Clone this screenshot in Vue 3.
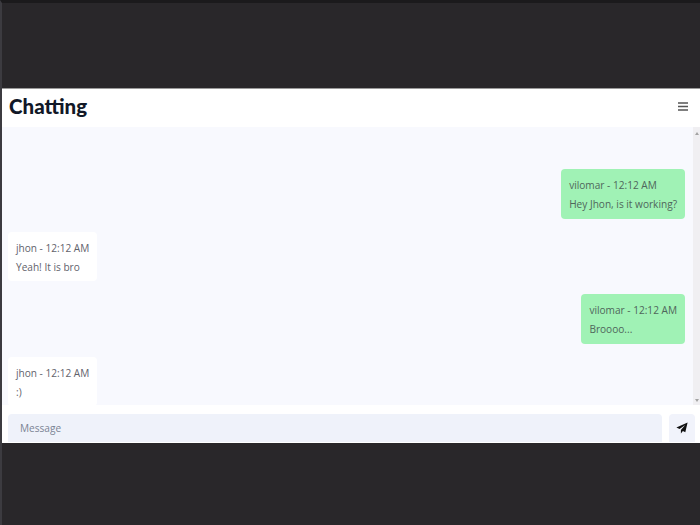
<template>
  <div class="screen">
    <div class="window">
      <header class="header">
        <h1 class="title">Chatting</h1>
        <button class="menu" aria-label="menu">
          <svg width="10" height="9" viewBox="0 0 10 9">
            <path d="M0 1h10M0 4.5h10M0 8h10" stroke="#555" stroke-width="1.4" fill="none" />
          </svg>
        </button>
      </header>
      <div class="chat">
        <div class="messages">
          <div v-for="msg in messages" :key="msg.id" class="bubble" :class="{ mine: msg.mine }">
            <div class="meta">{{ msg.user }} - {{ msg.time }}</div>
            <div class="text">{{ msg.text }}</div>
          </div>
        </div>
        <div class="scrollbar">
          <span class="arrow up"></span>
          <span class="arrow down"></span>
        </div>
      </div>
      <footer class="footer">
        <input class="input" type="text" placeholder="Message" />
        <button class="send" aria-label="send">
          <svg width="12" height="12" viewBox="0 0 12 12">
            <path d="M11.6 0.4 0.4 5.4l3.2 1.7 5.6-4-4.3 4.9v3.4l2-2.4 2.4 1.2z" fill="#111" />
          </svg>
        </button>
      </footer>
    </div>
  </div>
</template>

<script setup>
const messages = [
  { id: 1, user: 'vilomar', time: '12:12 AM', text: 'Hey Jhon, is it working?', mine: true },
  { id: 2, user: 'jhon', time: '12:12 AM', text: 'Yeah! It is bro', mine: false },
  { id: 3, user: 'vilomar', time: '12:12 AM', text: 'Broooo...', mine: true },
  { id: 4, user: 'jhon', time: '12:12 AM', text: ':)', mine: false }
]
</script>

<style>
html,
body {
  margin: 0;
  background: #29272a;
}
</style>

<style scoped>
.screen {
  width: 700px;
  height: 525px;
  box-sizing: border-box;
  padding: 85px 0 82px 0;
  border-top: 3px solid #1b1a1c;
  border-left: 2px solid #3c3b40;
  background: #29272a;
  font-family: "Open Sans", "Noto Sans", sans-serif;
  overflow: hidden;
}

.window {
  height: 355px;
  display: flex;
  flex-direction: column;
  background: #fff;
  border-top: 1px solid #9a9a9a;
  box-sizing: border-box;
}

.header {
  height: 38px;
  flex: none;
  display: flex;
  align-items: center;
  justify-content: space-between;
  padding: 0 12px 5px 7px;
  box-sizing: border-box;
}

.title {
  margin: 0;
  font-family: Lato, "Open Sans", sans-serif;
  font-size: 20.5px;
  font-weight: 900;
  color: #111827;
}

.menu {
  border: 0;
  padding: 1px 0 0;
  background: none;
  display: flex;
}

.chat {
  height: 278px;
  flex: none;
  display: flex;
  background: #f8f9fe;
  overflow: hidden;
}

.messages {
  flex: 1;
  display: flex;
  flex-direction: column;
  align-items: flex-start;
  gap: 13px;
  padding: 42px 8px 0 6px;
}

.bubble {
  height: 49.5px;
  box-sizing: border-box;
  padding: 7px 8px;
  border-radius: 4px;
  background: #fff;
  font-size: 10.1px;
  line-height: 18px;
  color: #62626c;
  flex: none;
}

.text {
  margin-top: 1px;
}

.bubble.mine {
  align-self: flex-end;
  background: #a0f2b5;
  color: #4f665b;
}

.scrollbar {
  width: 7px;
  flex: none;
  display: flex;
  flex-direction: column;
  justify-content: space-between;
  align-items: center;
  padding: 5px 0 3px;
  box-sizing: border-box;
  background: #f0eff2;
}

.arrow {
  width: 0;
  height: 0;
  border-left: 2.5px solid transparent;
  border-right: 2.5px solid transparent;
}

.arrow.up {
  border-bottom: 3px solid #a3a3a3;
}

.arrow.down {
  border-top: 3px solid #a3a3a3;
}

.footer {
  flex: 1;
  display: flex;
  align-items: flex-start;
  gap: 7px;
  padding: 9px 5px 0 6px;
}

.input {
  flex: 1;
  height: 28px;
  box-sizing: border-box;
  border: 0;
  border-radius: 4px 4px 0 0;
  padding: 0 12px;
  background: #eff2fa;
  font: 10.1px "Open Sans", "Noto Sans", sans-serif;
  outline: none;
}

.input::placeholder {
  color: #7b8494;
}

.send {
  width: 26px;
  height: 28px;
  border: 0;
  padding: 0;
  border-radius: 4px 4px 0 0;
  background: #f1f3fb;
  display: flex;
  align-items: center;
  justify-content: center;
}
</style>
